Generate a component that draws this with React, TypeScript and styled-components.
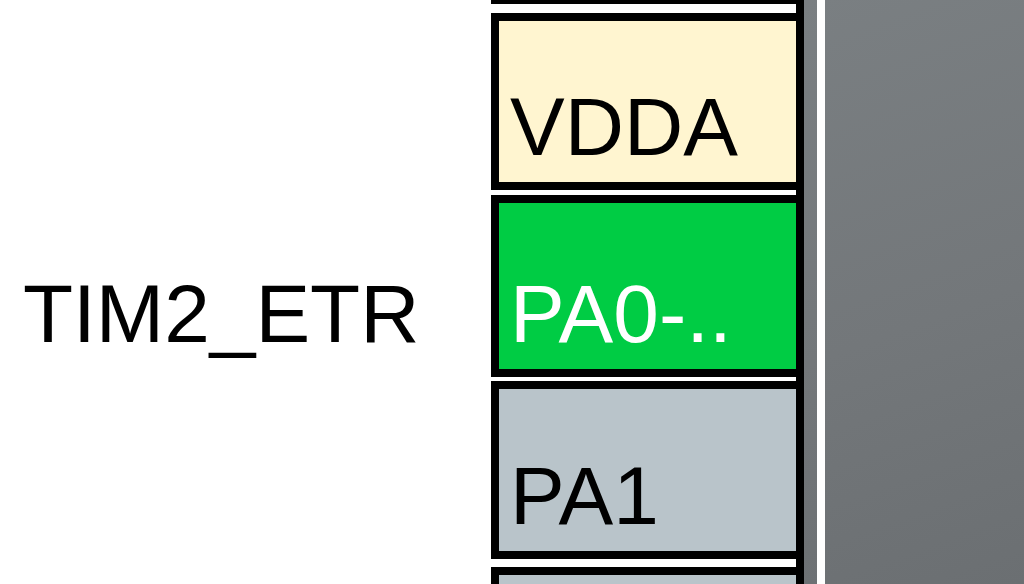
import React from "react";
import styled, { createGlobalStyle } from "styled-components";

const GlobalStyle = createGlobalStyle`
	html, body {
		margin: 0;
		padding: 0;
		background: #ffffff;
	}
	body {
		font-family: "Liberation Sans", Arial, sans-serif;
	}
`;

interface PinData {
	name: string;
	height: number;
	gap: number;
	bg: string;
	color: string;
	label?: string;
	cut?: boolean;
}

// pins are listed top to bottom; the first one is only its bottom edge
const pins: PinData[] = [
	{ name: "", height: 4, gap: 0, bg: "#000000", color: "#000000", cut: true },
	{ name: "VDDA", height: 177, gap: 9, bg: "#fff5d0", color: "#000000" },
	{ name: "PA0-..", height: 182, gap: 5, bg: "#00cc44", color: "#ffffff", label: "TIM2_ETR" },
	{ name: "PA1", height: 178, gap: 4, bg: "#b9c4ca", color: "#000000" },
	{ name: "", height: 60, gap: 8, bg: "#b9c4ca", color: "#000000" },
];

const Page = styled.div`
	display: flex;
	width: 1024px;
	height: 584px;
	overflow: hidden;
	background: #ffffff;
`;

const LabelColumn = styled.div`
	display: flex;
	flex-direction: column;
	width: 491px;
	flex-shrink: 0;
`;

const LabelSlot = styled.div<{ $h: number; $gap: number }>`
	display: flex;
	align-items: flex-end;
	height: ${(p) => p.$h}px;
	margin-top: ${(p) => p.$gap}px;
	box-sizing: border-box;
	flex-shrink: 0;
	overflow: hidden;
`;

const Label = styled.span`
	font-size: 82px;
	line-height: 1;
	color: #000000;
	white-space: nowrap;
	margin: 0 0 22px 23px;
`;

const PinColumn = styled.div`
	display: flex;
	flex-direction: column;
	width: 313px;
	flex-shrink: 0;
	border-right: 8px solid #000000;
	box-sizing: border-box;
`;

const Pin = styled.div<{ $h: number; $gap: number; $bg: string; $color: string; $cut?: boolean }>`
	display: flex;
	align-items: flex-end;
	height: ${(p) => p.$h}px;
	margin-top: ${(p) => p.$gap}px;
	flex-shrink: 0;
	box-sizing: border-box;
	border: ${(p) => (p.$cut ? "none" : "8px solid #000000")};
	border-right: none;
	background: ${(p) => p.$bg};
	color: ${(p) => p.$color};
	padding: ${(p) => (p.$cut ? "0" : "0 0 14px 11px")};
	overflow: hidden;
`;

const PinName = styled.span`
	font-size: 82px;
	line-height: 1;
	white-space: nowrap;
`;

const Backdrop = styled.div`
	flex: 1;
	display: flex;
	background: linear-gradient(160deg, #7a7f82 0%, #73777a 55%, #6b6f72 100%);
`;

const Divider = styled.div`
	width: 8px;
	margin-left: 13px;
	background: #ffffff;
`;

function App() {
	return (
		<>
			<GlobalStyle />
			<Page>
				<LabelColumn>
					{pins.map((p, i) => (
						<LabelSlot key={i} $h={p.height} $gap={p.gap}>
							{p.label && <Label>{p.label}</Label>}
						</LabelSlot>
					))}
				</LabelColumn>
				<PinColumn>
					{pins.map((p, i) => (
						<Pin key={i} $h={p.height} $gap={p.gap} $bg={p.bg} $color={p.color} $cut={p.cut}>
							{p.name && <PinName>{p.name}</PinName>}
						</Pin>
					))}
				</PinColumn>
				<Backdrop>
					<Divider />
				</Backdrop>
			</Page>
		</>
	);
}

export default App;
